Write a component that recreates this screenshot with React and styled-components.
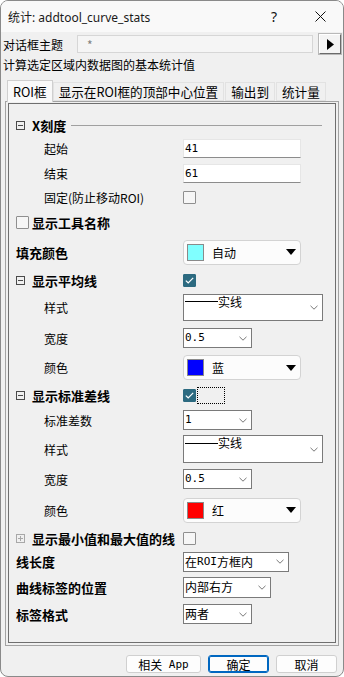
import React from 'react';
import styled, { createGlobalStyle } from 'styled-components';

const FONT = `"Noto Sans CJK SC", "Noto Sans", sans-serif`;
const MONO = `"DejaVu Sans Mono", "Liberation Mono", "Noto Sans CJK SC", monospace`;

const Global = createGlobalStyle`
  html, body { margin: 0; padding: 0; background: #ffffff; }
  * { box-sizing: border-box; }
`;

const Window = styled.div`
  position: relative;
  width: 344px;
  height: 677px;
  border: 1px solid #8a8a8a;
  border-radius: 8px;
  background: #f0f0f0;
  overflow: hidden;
  display: flex;
  flex-direction: column;
  font-family: ${FONT};
  font-size: 12px;
  color: #000;
`;

const TopGlint = styled.div`
  position: absolute;
  top: -1px;
  left: 36px;
  width: 236px;
  height: 1px;
  background: #c9b85c;
`;

const TitleBar = styled.div`
  height: 31px;
  flex: none;
  display: flex;
  align-items: center;
  padding-left: 7px;
  background: #f9f9f9;
`;

const TitleText = styled.div`
  flex: 1;
  font-family: "Noto Sans", "Noto Sans CJK SC", sans-serif;
  font-size: 12px;
  color: #1a1a1a;
  white-space: nowrap;
`;

const CaptionButton = styled.div`
  width: 46px;
  height: 31px;
  display: flex;
  align-items: center;
  justify-content: center;
  font-family: "Noto Sans", sans-serif;
  font-size: 14px;
  color: #111;
`;

const Body = styled.div`
  flex: 1;
  display: flex;
  flex-direction: column;
  padding: 0 2px;
`;

const ThemeRow = styled.div`
  height: 24px;
  display: flex;
  align-items: center;
`;

const ThemeLabel = styled.div`
  width: 74px;
  flex: none;
  white-space: nowrap;
`;

const ThemeInput = styled.div`
  width: 236px;
  height: 18px;
  border: 1px solid #d6d6d6;
  background: #f5f5f5;
  color: #808080;
  font-size: 12px;
  padding-left: 9px;
  display: flex;
  align-items: center;
`;

const ArrowButton = styled.div`
  width: 22px;
  height: 20px;
  margin-left: 6px;
  background: #f4f4f4;
  border: 1px solid;
  border-color: #ffffff #6a6a6a #6a6a6a #ffffff;
  box-shadow: 0 0 0 1px #b9b9b9;
  display: flex;
  align-items: center;
  justify-content: center;
`;

const Desc = styled.div`
  height: 16px;
  display: flex;
  align-items: center;
  white-space: nowrap;
`;

const TabStrip = styled.div`
  margin-top: 8px;
  margin-left: 4px;
  height: 21px;
  display: flex;
  align-items: flex-end;
  position: relative;
  z-index: 1;
`;

const Tab = styled.div`
  height: ${p => (p.$active ? 22 : 19)}px;
  margin-bottom: ${p => (p.$active ? -1 : 0)}px;
  padding: 0 5px 0 5px;
  font-size: 12.6px;
  display: flex;
  align-items: center;
  white-space: nowrap;
  background: ${p => (p.$active ? '#f9f9f9' : '#f0f0f0')};
  border: 1px solid ${p => (p.$active ? '#cfcfcf' : '#e2e2e2')};
  border-bottom: ${p => (p.$active ? 'none' : '1px solid #e2e2e2')};
  margin-right: ${p => (p.$active ? 0 : 1)}px;
`;

const Panel = styled.div`
  margin-left: 2px;
  width: 334px;
  height: 545px;
  border: 1px solid #a3a3a3;
  padding: 1px 2px 2px 2px;
  display: flex;
`;

const PanelInner = styled.div`
  flex: 1;
  border: 1px solid #6f6f6f;
  padding-top: 9px;
  display: flex;
  flex-direction: column;
`;

const Row = styled.div`
  height: ${p => p.$h}px;
  flex: none;
  display: flex;
  align-items: center;
`;

const Label = styled.div`
  width: ${p => (p.$auto ? 'auto' : '174px')};
  flex: none;
  padding-left: ${p => (p.$indent ? 35 : 7)}px;
  font-size: ${p => (p.$bold ? 13 : 12)}px;
  font-weight: ${p => (p.$bold ? 700 : 400)};
  display: flex;
  align-items: center;
  white-space: nowrap;
`;

const HeaderLine = styled.div`
  flex: 1;
  height: 1px;
  background: #a0a0a0;
  margin: 0 13px 0 5px;
`;

const ToggleBox = styled.svg`
  flex: none;
  margin-right: 7px;
`;

const CheckBox = styled.div`
  width: 13px;
  height: 13px;
  flex: none;
  border: 1px solid ${p => (p.$checked ? '#2c6a80' : '#8f8f8f')};
  background: ${p => (p.$checked ? '#2c6a80' : '#f6f6f6')};
  border-radius: 1px;
  margin-right: ${p => p.$mr || 0}px;
  display: flex;
  align-items: center;
  justify-content: center;
`;

const FocusRect = styled.div`
  width: 28px;
  height: 17px;
  margin-left: 1px;
  border: 1px dotted #000;
`;

const TextInput = styled.div`
  width: 118px;
  height: 19px;
  background: #ffffff;
  border: 1px solid #e6e6e6;
  border-bottom-color: #8c8c8c;
  font-family: ${MONO};
  font-size: 11px;
  padding-left: 1px;
  display: flex;
  align-items: center;
`;

const ColorCombo = styled.div`
  width: 118px;
  height: 25px;
  background: #fcfcfc;
  border: 1px solid #d3d3d3;
  border-radius: 4px;
  display: flex;
  align-items: center;
  padding: 0 4px 0 3px;
`;

const Swatch = styled.div`
  width: 17px;
  height: 17px;
  flex: none;
  background: ${p => p.$color};
  border: 1px solid #8a8a8a;
  margin-right: 8px;
`;

const ComboText = styled.div`
  flex: 1;
  font-size: 12px;
`;

const DropCombo = styled.div`
  width: ${p => p.$w}px;
  height: ${p => p.$h || 20}px;
  background: #ffffff;
  border: 1px solid #7a7a7a;
  display: flex;
  align-items: center;
  padding: 0 4px 0 1px;
`;

const DropValue = styled.div`
  flex: 1;
  align-self: ${p => (p.$top ? 'flex-start' : 'center')};
  font-family: ${p => (p.$mono ? MONO : FONT)};
  font-size: ${p => (p.$mono ? 11 : 12)}px;
  line-height: ${p => (p.$top ? 14 : 16)}px;
  display: flex;
  align-items: center;
  white-space: nowrap;
`;

const LineSample = styled.span`
  display: inline-block;
  width: 33px;
  height: 1px;
  background: #000;
`;

const Footer = styled.div`
  margin-top: 9px;
  height: 18px;
  display: flex;
  justify-content: flex-end;
  gap: 7px;
  padding-right: 4px;
`;

const Button = styled.div`
  width: ${p => p.$w}px;
  height: 18px;
  border: 1px solid ${p => (p.$primary ? '#0067c0' : '#d0d0d0')};
  box-shadow: ${p => (p.$primary ? 'inset 0 0 0 1px #0067c0' : 'none')};
  border-radius: 3px;
  background: #fdfdfd;
  display: flex;
  align-items: center;
  justify-content: center;
  font-size: 12px;
  white-space: nowrap;
`;

const Mono = styled.span`
  font-family: ${MONO};
  font-size: 11px;
`;

function Toggle({ open, disabled }) {
  const c = disabled ? '#a8a8a8' : '#4a4a4a';
  return (
    <ToggleBox width="9" height="9" viewBox="0 0 9 9">
      <rect x="0.5" y="0.5" width="8" height="8" fill="none" stroke={c} />
      <line x1="2" y1="4.5" x2="7" y2="4.5" stroke={c} />
      {!open && <line x1="4.5" y1="2" x2="4.5" y2="7" stroke={c} />}
    </ToggleBox>
  );
}

function Check() {
  return (
    <svg width="9" height="7" viewBox="0 0 9 7">
      <polyline points="0.8,3.6 3.2,5.8 8.2,0.8" fill="none" stroke="#fff" strokeWidth="1.2" />
    </svg>
  );
}

function Chevron() {
  return (
    <svg width="8" height="5" viewBox="0 0 8 5">
      <polyline points="0.5,0.8 4,4.2 7.5,0.8" fill="none" stroke="#6a6a6a" strokeWidth="0.9" />
    </svg>
  );
}

function Caret() {
  return (
    <svg width="10" height="6" viewBox="0 0 10 6">
      <polygon points="0,0 10,0 5,6" fill="#000" />
    </svg>
  );
}

function Combo({ w, h, top, mono, children }) {
  return (
    <DropCombo $w={w} $h={h}>
      <DropValue $top={top} $mono={mono}>{children}</DropValue>
      <Chevron />
    </DropCombo>
  );
}

function ColorPick({ color, text }) {
  return (
    <ColorCombo>
      <Swatch $color={color} />
      <ComboText>{text}</ComboText>
      <Caret />
    </ColorCombo>
  );
}

export default function App() {
  return (
    <>
      <Global />
      <Window>
        <TopGlint />
        <TitleBar>
          <TitleText>统计: addtool_curve_stats</TitleText>
          <CaptionButton>?</CaptionButton>
          <CaptionButton>
            <svg width="11" height="11" viewBox="0 0 11 11">
              <path d="M0.5 0.5 L10.5 10.5 M10.5 0.5 L0.5 10.5" stroke="#111" strokeWidth="1" />
            </svg>
          </CaptionButton>
        </TitleBar>
        <Body>
          <ThemeRow>
            <ThemeLabel>对话框主题</ThemeLabel>
            <ThemeInput>*</ThemeInput>
            <ArrowButton>
              <svg width="7" height="11" viewBox="0 0 7 11">
                <polygon points="0,0 7,5.5 0,11" fill="#000" />
              </svg>
            </ArrowButton>
          </ThemeRow>
          <Desc>计算选定区域内数据图的基本统计值</Desc>
          <TabStrip>
            <Tab $active>ROI框</Tab>
            <Tab>显示在ROI框的顶部中心位置</Tab>
            <Tab>输出到</Tab>
            <Tab>统计量</Tab>
          </TabStrip>
          <Panel>
            <PanelInner>
              <Row $h={24}>
                <Label $bold $auto>
                  <Toggle open />X刻度
                </Label>
                <HeaderLine />
              </Row>
              <Row $h={22}>
                <Label $indent>起始</Label>
                <TextInput>41</TextInput>
              </Row>
              <Row $h={28}>
                <Label $indent>结束</Label>
                <TextInput>61</TextInput>
              </Row>
              <Row $h={20}>
                <Label $indent>固定(防止移动ROI)</Label>
                <CheckBox />
              </Row>
              <Row $h={30}>
                <Label $bold>
                  <CheckBox $mr={3} />显示工具名称
                </Label>
              </Row>
              <Row $h={30}>
                <Label $bold>填充颜色</Label>
                <ColorPick color="#80ffff" text="自动" />
              </Row>
              <Row $h={26}>
                <Label $bold>
                  <Toggle open />显示平均线
                </Label>
                <CheckBox $checked><Check /></CheckBox>
              </Row>
              <Row $h={28}>
                <Label $indent>样式</Label>
                <Combo w={140} h={27} top><LineSample />实线</Combo>
              </Row>
              <Row $h={34}>
                <Label $indent>宽度</Label>
                <Combo w={69} mono>0.5</Combo>
              </Row>
              <Row $h={25}>
                <Label $indent>颜色</Label>
                <ColorPick color="#0000ff" text="蓝" />
              </Row>
              <Row $h={30}>
                <Label $bold>
                  <Toggle open />显示标准差线
                </Label>
                <CheckBox $checked><Check /></CheckBox>
                <FocusRect />
              </Row>
              <Row $h={20}>
                <Label $indent>标准差数</Label>
                <Combo w={69} mono>1</Combo>
              </Row>
              <Row $h={38}>
                <Label $indent>样式</Label>
                <Combo w={140} h={28} top><LineSample />实线</Combo>
              </Row>
              <Row $h={22}>
                <Label $indent>宽度</Label>
                <Combo w={69} mono>0.5</Combo>
              </Row>
              <Row $h={40}>
                <Label $indent>颜色</Label>
                <ColorPick color="#ff0000" text="红" />
              </Row>
              <Row $h={16}>
                <Label $bold>
                  <Toggle disabled />显示最小值和最大值的线
                </Label>
                <CheckBox />
              </Row>
              <Row $h={31}>
                <Label $bold>线长度</Label>
                <Combo w={106}>在<Mono>ROI</Mono>方框内</Combo>
              </Row>
              <Row $h={20}>
                <Label $bold>曲线标签的位置</Label>
                <Combo w={88} h={21}>内部右方</Combo>
              </Row>
              <Row $h={34}>
                <Label $bold>标签格式</Label>
                <Combo w={69}>两者</Combo>
              </Row>
            </PanelInner>
          </Panel>
          <Footer>
            <Button $w={75}>相关 <Mono>&nbsp;App</Mono></Button>
            <Button $w={61} $primary>确定</Button>
            <Button $w={61}>取消</Button>
          </Footer>
        </Body>
      </Window>
    </>
  );
}
